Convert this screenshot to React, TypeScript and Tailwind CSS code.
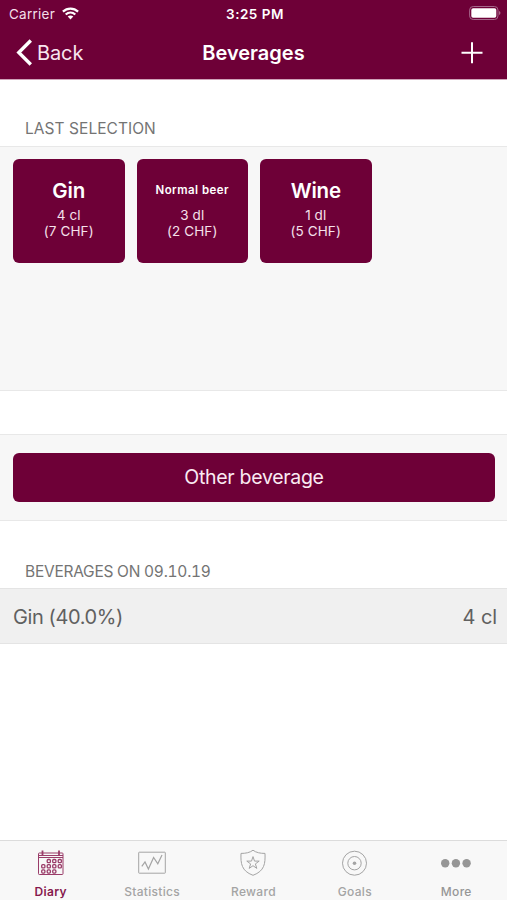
import type { ReactNode } from 'react';

const recent = [
  { name: 'Gin', amount: '4 cl', price: '(7 CHF)', nameClass: 'text-[20.5px] tracking-[-0.1px]' },
  { name: 'Normal beer', amount: '3 dl', price: '(2 CHF)', nameClass: 'text-[11.5px] tracking-[0.45px]' },
  { name: 'Wine', amount: '1 dl', price: '(5 CHF)', nameClass: 'text-[20.5px] tracking-[-0.2px]' }
];

const calendarDots = [
  [29, 13], [34.5, 13], [40, 13],
  [23.5, 18.2], [29, 18.2], [34.5, 18.2], [40, 18.2],
  [23.5, 23.4], [29, 23.4], [34.5, 23.4]
];

function WifiIcon() {
  return (
    <svg className="h-[13px] w-[17px]" viewBox="0 0 17 13" fill="none" stroke="white" strokeWidth={2.2}>
      <path d="M0.9 4.6C5.2 0.5 11.8 0.5 16.1 4.6" />
      <path d="M3.7 7.5C6.5 4.9 10.5 4.9 13.3 7.5" />
      <path d="M8.5 12.4L5.7 9.6C7.3 8.2 9.7 8.2 11.3 9.6Z" fill="white" stroke="none" />
    </svg>
  );
}

function BatteryIcon() {
  return (
    <svg className="h-[15px] w-[32px]" viewBox="0 0 32 15" fill="none">
      <rect x="0.6" y="0.5" width="28.4" height="13" rx="3.6" stroke="#a5668a" />
      <rect x="2.3" y="2.2" width="25" height="9.6" rx="1.8" fill="white" />
      <path d="M30.2 5.1C31.8 5.6 31.8 8.6 30.2 9.1Z" fill="#b77f9a" />
    </svg>
  );
}

function DiaryIcon() {
  return (
    <svg className="h-7 w-7" viewBox="0 0 28 28" fill="none" stroke="#9a3c69" strokeWidth={1}>
      <rect x="1.5" y="4" width="24.5" height="21.5" rx="0.8" />
      <path d="M1.5 8.5H26M1.5 6.5H26" />
      <path d="M5.5 1.5V6M22 1.5V6" strokeWidth={1.8} />
      {calendarDots.map(([x, y]) => (
        <rect key={`${x}-${y}`} x={x - 18.8} y={y - 2.5} width="3.2" height="3.2" rx="1" strokeWidth={1.3} />
      ))}
    </svg>
  );
}

function StatisticsIcon() {
  return (
    <svg className="h-7 w-7" viewBox="0 0 28 28" fill="none" stroke="currentColor">
      <rect x="0.7" y="3.2" width="26.6" height="21" rx="0.5" />
      <path d="M3.8 17.3L7 13L10.4 20L15.6 8.5L19.8 14.8L24 6" strokeWidth={1.2} />
    </svg>
  );
}

function RewardIcon() {
  return (
    <svg className="h-7 w-7" viewBox="0 0 28 28" fill="none" stroke="currentColor">
      <path d="M14 1.2C11 3.6 6.5 4.5 2 4.4C1.6 14.5 2.4 22 14 26.3C25.6 22 26.4 14.5 26 4.4C21.5 4.5 17 3.6 14 1.2Z" />
      <path d="M14 7.6L15.5 12.1H20.2L16.4 14.9L17.8 19.4L14 16.7L10.2 19.4L11.6 14.9L7.8 12.1H12.5Z" />
    </svg>
  );
}

function GoalsIcon() {
  return (
    <svg className="h-7 w-7" viewBox="0 0 28 28" fill="none" stroke="currentColor">
      <circle cx="13.5" cy="14.2" r="12" />
      <circle cx="13.5" cy="14.2" r="6.7" />
      <circle cx="13.5" cy="14.2" r="1.8" fill="currentColor" stroke="none" />
    </svg>
  );
}

function MoreIcon() {
  return (
    <svg className="h-7 w-8" viewBox="0 0 32 28" fill="currentColor">
      <circle cx="5.2" cy="14.3" r="4.2" />
      <circle cx="15.9" cy="14.3" r="4.2" />
      <circle cx="26.6" cy="14.3" r="4.2" />
    </svg>
  );
}

const tabs: { label: string; icon: ReactNode; className: string }[] = [
  { label: 'Diary', icon: <DiaryIcon />, className: 'text-[#86194d] font-semibold' },
  { label: 'Statistics', icon: <StatisticsIcon />, className: 'text-[#a4a4a4] font-medium' },
  { label: 'Reward', icon: <RewardIcon />, className: 'text-[#a4a4a4] font-medium' },
  { label: 'Goals', icon: <GoalsIcon />, className: 'text-[#a4a4a4] font-medium' },
  { label: 'More', icon: <MoreIcon />, className: 'text-[#969696] font-medium' }
];

export default function App() {
  return (
    <div className="flex h-[900px] w-[507px] flex-col overflow-hidden bg-white font-['Inter',sans-serif]">
      <header className="h-20 shrink-0 border-b border-[#cfa3b8] bg-[#6e0037] text-white">
        <div className="grid h-[27px] grid-cols-3 items-center pr-[6px] pl-[9px] text-[13.5px] leading-4">
          <div className="flex items-center gap-[7px] text-[#f3dfe9]">
            <span className="tracking-[0.25px]">Carrier</span>
            <WifiIcon />
          </div>
          <span className="text-center font-semibold tracking-[0.5px]">3:25 PM</span>
          <div className="flex justify-end">
            <BatteryIcon />
          </div>
        </div>
        <div className="grid h-[51px] grid-cols-3 items-center px-4">
          <button className="flex items-center gap-[5px] text-left text-[20px] tracking-[-0.1px] text-[#f8e6ef]">
            <svg className="h-[27px] w-4" viewBox="0 0 16 27" fill="none" stroke="white" strokeWidth={3.4}>
              <path d="M14.8 1.5L2.8 13.5L14.8 25.5" />
            </svg>
            Back
          </button>
          <h1 className="text-center text-[20px] font-semibold">Beverages</h1>
          <button className="flex justify-end pr-2" aria-label="Add beverage">
            <svg className="size-[22px]" viewBox="0 0 22 22" stroke="white" strokeWidth={2}>
              <path d="M11 0.2V21.2M0.5 10.7H21.5" />
            </svg>
          </button>
        </div>
      </header>

      <main className="flex-1">
        <h2 className="flex h-[66px] items-end pb-[7px] pl-[25px] text-[15.5px] leading-5 tracking-[0.05px] text-[#747474]">
          LAST SELECTION
        </h2>
        <section className="flex h-[245px] items-start gap-3 border-y border-[#e8e8e8] bg-[#f7f7f7] pt-3 pl-[13px]">
          {recent.map((item) => (
            <button
              key={item.name}
              className="flex h-[104px] w-[111.5px] flex-col items-center rounded-[6px] bg-[#6e0037] pt-[18px] text-white"
            >
              <span className={`flex h-[27px] items-center pt-px font-semibold ${item.nameClass}`}>{item.name}</span>
              <span className="mt-[3px] text-[13.5px] leading-4 tracking-[0.1px] text-[#f5e1eb]">{item.amount}</span>
              <span className="text-[13.5px] leading-4 tracking-[0.1px] text-[#f5e1eb]">{item.price}</span>
            </button>
          ))}
        </section>

        <section className="mt-[43px] h-[87px] border-y border-[#e8e8e8] bg-[#f7f7f7] pr-3 pl-[13px] pt-[18px]">
          <button className="h-[49px] w-full rounded-[6px] bg-[#6e0037] pt-px text-[19.5px] tracking-[-0.3px] text-[#faeaf2]">
            Other beverage
          </button>
        </section>

        <h2 className="flex h-[67px] items-end pb-[6px] pl-[25px] text-[15.5px] leading-5 tracking-[-0.25px] tabular-nums text-[#747474]">
          BEVERAGES ON 09.10.19
        </h2>
        <div className="flex h-[56px] items-center justify-between border-y border-[#e4e4e4] bg-[#f0f0f0] pt-[2px] pr-[10px] pl-[13px] text-[20px] tracking-[-0.4px] text-[#606060]">
          <span>Gin (40.0%)</span>
          <span className="tracking-[-0.1px]">4 cl</span>
        </div>
      </main>

      <nav className="grid h-[60px] shrink-0 grid-cols-5 border-t border-[#dcdcdc] bg-[#f8f8f8]">
        {tabs.map((tab) => (
          <button key={tab.label} className={`flex flex-col items-center pt-[8px] ${tab.className}`}>
            {tab.icon}
            <span className="mt-[7px] text-[12px] leading-4 tracking-[0.3px]">{tab.label}</span>
          </button>
        ))}
      </nav>
    </div>
  );
}
